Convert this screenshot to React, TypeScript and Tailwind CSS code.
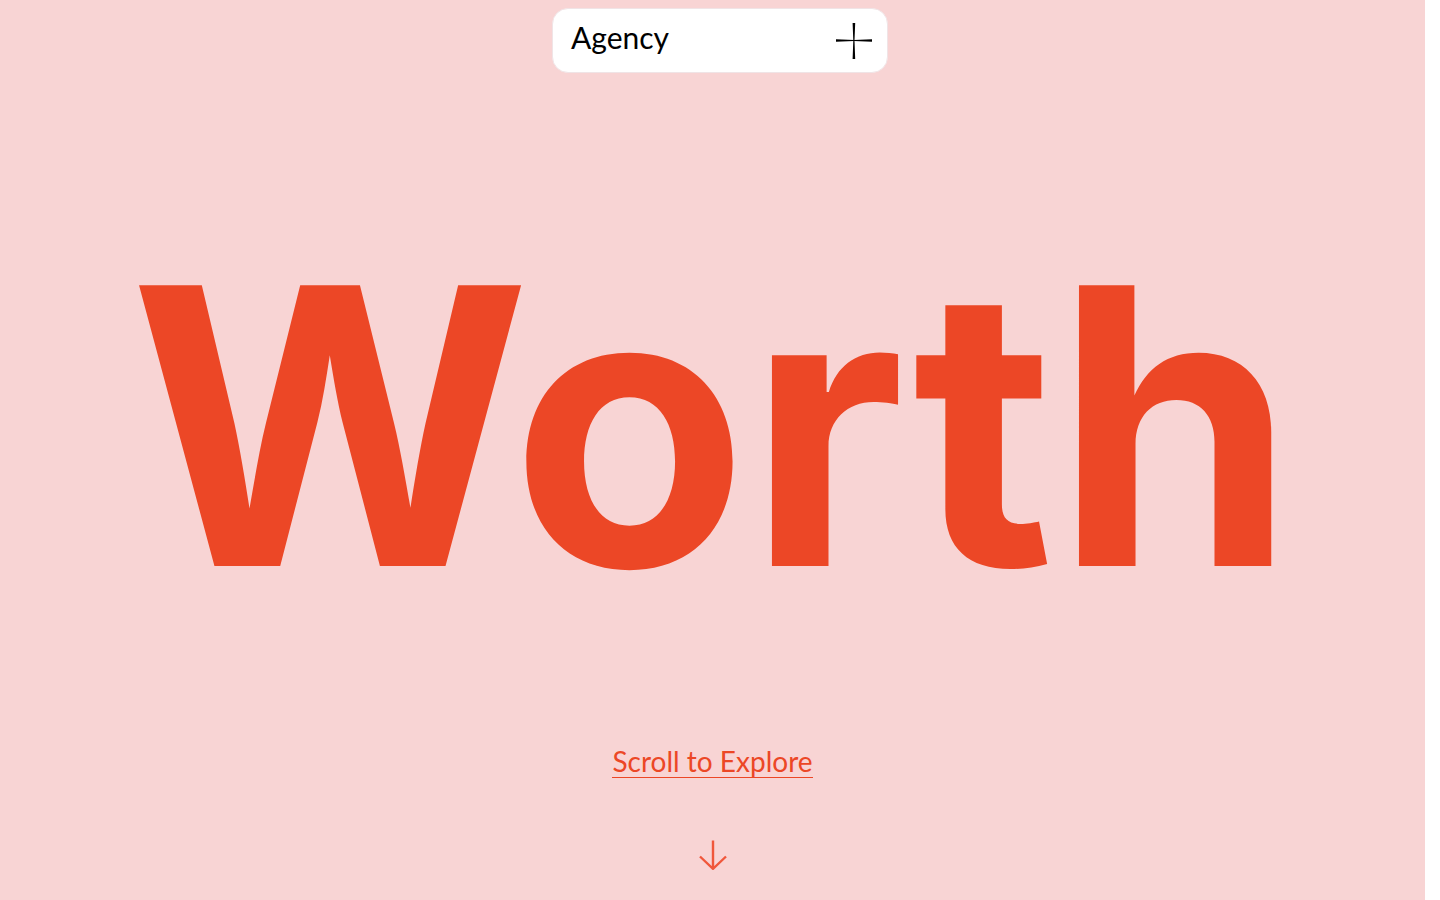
import { useState } from 'react';

const NAV_LABEL = 'Agency';
const TITLE = 'Worth';

export default function App() {
  return (
    <div className="flex min-h-screen bg-white font-['Lato',sans-serif]">
      <NavBar />

      <main className="flex min-w-0 flex-1 flex-col items-center overflow-hidden bg-[#f8d4d4] pb-[30px] text-[#ec4726]">
        <div className="flex flex-1 items-center pt-[107px]">
          <h1 className="font-['Inter',sans-serif] text-[386px] font-bold leading-none">{TITLE}</h1>
        </div>

        <a href="#explore" className="border-b border-[#ec4726] text-[28px] leading-8">
          Scroll to Explore
        </a>
        <a href="#explore" aria-label="Scroll down" className="mt-[62px]">
          <ArrowDown />
        </a>
      </main>

      {/* Scrollbar gutter */}
      <div className="w-[15px] shrink-0 bg-white" />
    </div>
  );
}

/* ── NavBar ──────────────────────────────────────────────────────── */
function NavBar() {
  const [open, setOpen] = useState(false);

  return (
    <header className="fixed inset-x-0 top-2 z-10 flex justify-center">
      <nav className="flex h-[65px] w-[336px] items-center justify-between rounded-2xl border border-[#f0e4e6] bg-white pl-[18px] pr-[15px] text-black">
        <a href="#home" className="pb-2 text-[30px] leading-8">{NAV_LABEL}</a>
        <button
          type="button"
          aria-label="Menu"
          aria-expanded={open}
          onClick={() => setOpen((v) => !v)}
          className="cursor-pointer"
        >
          <PlusIcon />
        </button>
      </nav>
    </header>
  );
}

/* Arms are thin in the middle and widen towards the ends */
function PlusIcon() {
  return (
    <svg width="36" height="36" viewBox="0 0 36 36" fill="currentColor" aria-hidden="true">
      <path d="M16.6 0h2.6L18.5 17.5l.7 18.5h-2.6l.7-18.5z" />
      <path d="M0 16.2l18 .7 18-.7v2.6l-18-.7-18 .7z" />
    </svg>
  );
}

function ArrowDown() {
  return (
    <svg width="28" height="30" viewBox="0 0 28 30" fill="none" stroke="#f0573b" strokeWidth="2.4" aria-hidden="true">
      <path d="M14 .5v28M1 16.5l13 12.3 13-12.3" />
    </svg>
  );
}
